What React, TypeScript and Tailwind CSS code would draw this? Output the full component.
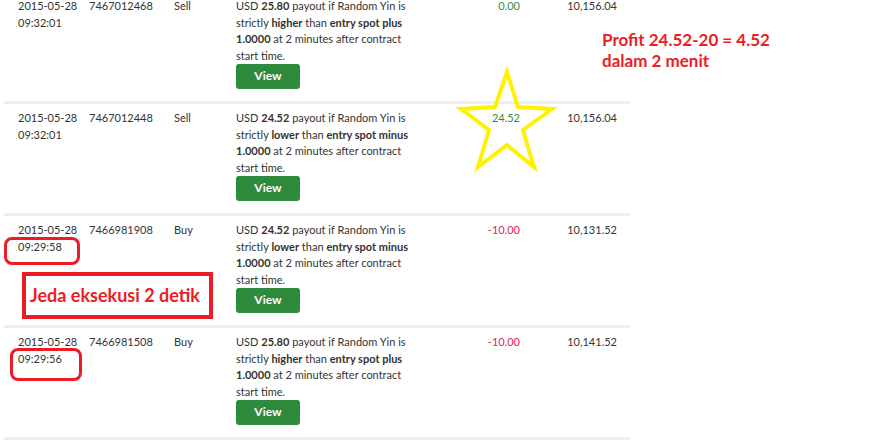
import React from "react";

type Trade = {
  date: string;
  time: string;
  ref: string;
  kind: "Buy" | "Sell";
  payout: string;
  dir: "higher" | "lower";
  profit: string;
  balance: string;
};

const trades: Trade[] = [
  { date: "2015-05-28", time: "09:32:01", ref: "7467012468", kind: "Sell", payout: "25.80", dir: "higher", profit: "0.00", balance: "10,156.04" },
  { date: "2015-05-28", time: "09:32:01", ref: "7467012448", kind: "Sell", payout: "24.52", dir: "lower", profit: "24.52", balance: "10,156.04" },
  { date: "2015-05-28", time: "09:29:58", ref: "7466981908", kind: "Buy", payout: "24.52", dir: "lower", profit: "-10.00", balance: "10,131.52" },
  { date: "2015-05-28", time: "09:29:56", ref: "7466981508", kind: "Buy", payout: "25.80", dir: "higher", profit: "-10.00", balance: "10,141.52" },
];

function TradeRow({ t }: { t: Trade }) {
  const loss = t.profit.startsWith("-");
  return (
    <div className="grid grid-cols-[71px_85px_62px_190px_94px_97px] pl-[14px] pr-[13px] pt-[6px] pb-[12px] border-b-[3px] border-[#f0f0f0]">
      <div>
        {t.date}
        <br />
        {t.time}
      </div>
      <div>{t.ref}</div>
      <div>{t.kind}</div>
      <div>
        <p>
          USD <b className="font-bold">{t.payout}</b> payout if Random Yin is
          <br />
          strictly <b className="font-bold">{t.dir}</b> than{" "}
          <b className="font-bold">entry spot {t.dir === "higher" ? "plus" : "minus"}</b>
          <br />
          <b className="font-bold">1.0000</b> at 2 minutes after contract
          <br />
          start time.
        </p>
        <button className="w-[64px] h-[25px] rounded-[3px] bg-[#2e8a3c] text-white font-bold text-[12px]">
          View
        </button>
      </div>
      <div className={`text-right ${loss ? "text-[#e2214a]" : "text-[#3a8a48]"}`}>{t.profit}</div>
      <div className="text-right">{t.balance}</div>
    </div>
  );
}

export default function App() {
  return (
    <div className="relative w-[882px] h-[445px] overflow-hidden bg-white">
      <div
        className="ml-[4px] mt-[-8px] w-[626px] text-[11px] leading-[16.5px] text-[#333]"
        style={{ fontFamily: "Lato, 'Noto Sans', sans-serif" }}
      >
        {trades.map((t) => (
          <TradeRow key={t.ref} t={t} />
        ))}
      </div>

      {/* annotations drawn over the screenshot */}
      <div
        className="absolute left-[602px] top-[29px] text-[17px] leading-[21px] font-bold text-[#ed1c24]"
        style={{ fontFamily: "Lato, 'Open Sans', sans-serif" }}
      >
        Profit 24.52-20 = 4.52
        <br />
        dalam 2 menit
      </div>

      <svg className="absolute left-0 top-0" width="882" height="445">
        <polygon
          points="507,72 518,107 552,109 523,130 534,167 507,145 478,167 489,130 461,109 495,107"
          fill="none"
          stroke="#fff200"
          strokeWidth="4"
        />
      </svg>

      <div className="absolute left-[4px] top-[237px] w-[76px] h-[28px] rounded-[8px] border-[3px] border-[#ed1c24]" />
      <div className="absolute left-[10px] top-[348px] w-[72px] h-[33px] rounded-[8px] border-[3px] border-[#ed1c24]" />

      <div
        className="absolute left-[22px] top-[272px] w-[191px] h-[47px] border-[4px] border-[#ed1c24] flex items-center pl-[4px] text-[18px] font-bold text-[#ed1c24]"
        style={{ fontFamily: "Lato, 'Open Sans', sans-serif" }}
      >
        Jeda eksekusi 2 detik
      </div>
    </div>
  );
}
